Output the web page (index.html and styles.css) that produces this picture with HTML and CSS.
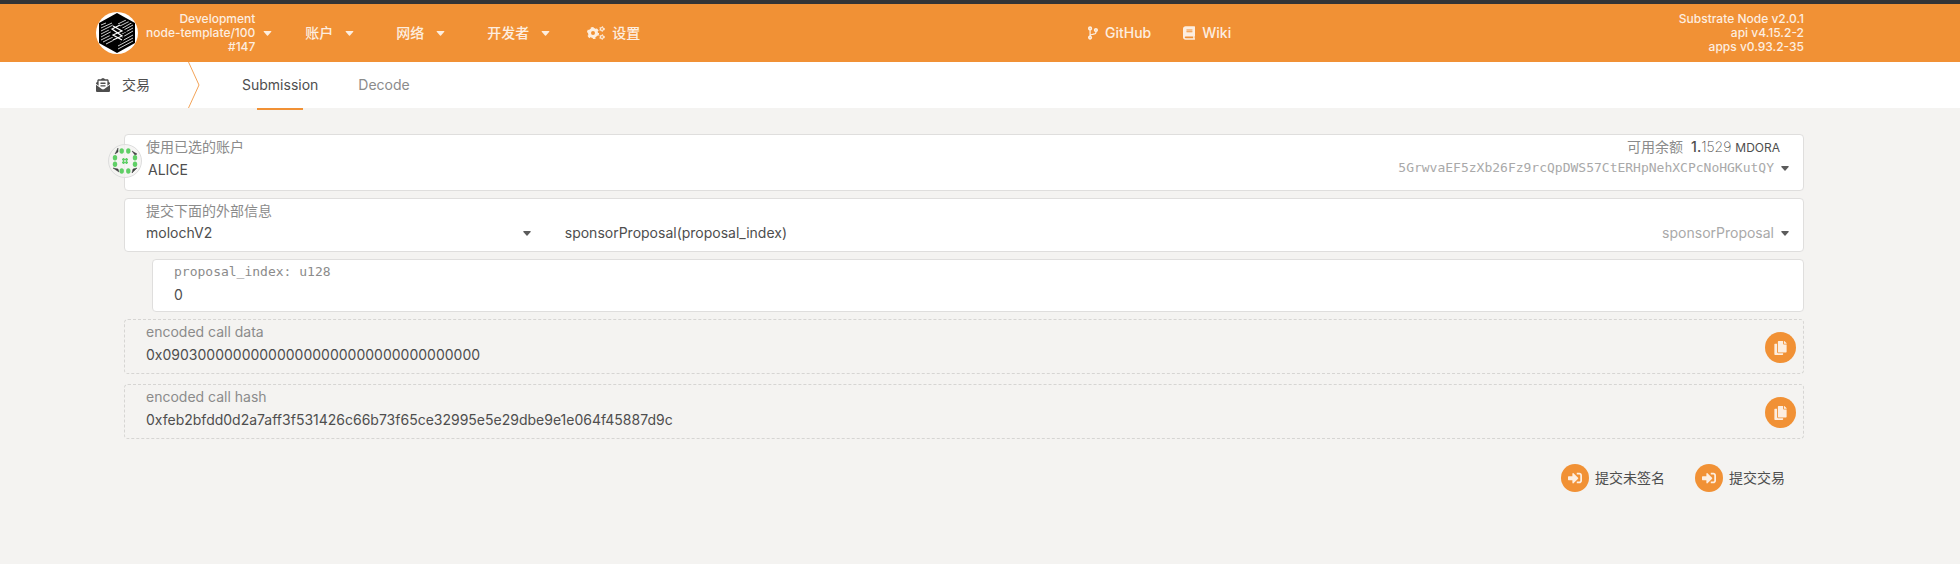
FILE: index.html
```html
<!DOCTYPE html>
<html lang="zh-CN">
<head>
<meta charset="utf-8">
<meta name="viewport" content="width=device-width, initial-scale=1">
<title>交易 - Submission</title>
<link rel="stylesheet" href="styles.css">
</head>
<body>
<svg class="sprite" aria-hidden="true">
  <symbol id="caret" viewBox="0 0 10 6"><path d="M1 0h8q1.200 0 .5 1L5.600 5.400q-.6.6-1.200 0L.5 1Q-.2 0 1 0z"/></symbol>
  <symbol id="copy" viewBox="0 0 448 512"><path d="M320 448v40c0 13.255-10.745 24-24 24H24c-13.255 0-24-10.745-24-24V120c0-13.255 10.745-24 24-24h72v296c0 30.879 25.121 56 56 56h168zm0-344V0H152c-13.255 0-24 10.745-24 24v368c0 13.255 10.745 24 24 24h272c13.255 0 24-10.745 24-24V128H344c-13.200 0-24-10.800-24-24zm120.971-31.029L375.029 7.029A24 24 0 0 0 358.059 0H352v96h96v-6.059a24 24 0 0 0-7.029-16.970z"/></symbol>
  <symbol id="sign-in" viewBox="0 0 512 512"><path d="M416 448h-84c-6.600 0-12-5.400-12-12v-40c0-6.600 5.400-12 12-12h84c17.700 0 32-14.300 32-32V160c0-17.700-14.300-32-32-32h-84c-6.600 0-12-5.400-12-12V76c0-6.600 5.400-12 12-12h84c53 0 96 43 96 96v192c0 53-43 96-96 96zm-47-201L201 79c-15-15-41-4.500-41 17v96H24c-13.300 0-24 10.700-24 24v96c0 13.300 10.700 24 24 24h136v96c0 21.500 26 32 41 17l168-168c9.300-9.400 9.300-24.600 0-34z"/></symbol>
</svg>

<header class="topbar">
  <div class="topbar-left">
    <button class="chain" type="button">
      <svg class="logo" viewBox="0 0 42 42" aria-hidden="true">
        <defs><clipPath id="stripes"><path d="M5 12L21 3l16 9v18l-16 9-16-9z"/></clipPath></defs>
        <circle cx="21" cy="21" r="21" fill="#fff"/>
        <path d="M21 1l18 10v20L21 41 3 31V11z" fill="#000"/>
        <g clip-path="url(#stripes)" fill="none" stroke="#fff" stroke-width=".8">
          <path d="M5 16l11 -5M5 19l12-6M5 22l12-6M5 25l13-7M5 28l14-7M7 30l12-6M10 32l10-5"/>
          <path d="M22 12l8-4M24 14l10-5M25 17l12-7M24 20l13-7M24 23l13-7M25 26l12-7M24 30l13-7M22 34l15-8M22 37l15-8M5 13l5-2"/>
        </g>
        <path d="M17 13l10 6-10 4 10 6M24 14l-8 4 9 6-8 4" fill="none" stroke="#000" stroke-width="4"/>
        <path d="M17 14l9 5-9 4 9 5M24 13l-8 4 10 7-9 4" fill="none" stroke="#fff" stroke-width="1.200"/>
      </svg>
      <span class="info">Development<br>node-template/100<br>#147</span>
      <svg class="caret"><use href="#caret"/></svg>
    </button>
    <nav class="menu">
      <button class="menu-item" type="button">账户<svg class="caret"><use href="#caret"/></svg></button>
      <button class="menu-item" type="button">网络<svg class="caret"><use href="#caret"/></svg></button>
      <button class="menu-item" type="button">开发者<svg class="caret"><use href="#caret"/></svg></button>
    </nav>
    <a class="menu-link settings" href="#settings">
      <svg class="cogs" viewBox="0 0 18 14" fill="none" stroke="currentColor" aria-hidden="true">
        <circle cx="6" cy="7" r="3.500" stroke-width="3"/>
        <circle cx="6" cy="7" r="5.200" stroke-width="1.800" stroke-dasharray="2.700 2.745"/>
        <circle cx="15" cy="3" r="1.500" stroke-width="1.200"/>
        <circle cx="15" cy="3" r="2.400" stroke-width="1" stroke-dasharray="1.200 1.313"/>
        <circle cx="15" cy="11" r="1.500" stroke-width="1.200"/>
        <circle cx="15" cy="11" r="2.400" stroke-width="1" stroke-dasharray="1.200 1.313"/>
      </svg>设置</a>
  </div>
  <nav class="links">
    <a class="menu-link" href="#github"><svg class="icon-branch" viewBox="0 0 384 512" aria-hidden="true"><path d="M384 144c0-44.200-35.800-80-80-80s-80 35.800-80 80c0 36.400 24.300 67.100 57.500 76.800-.6 16.100-4.200 28.500-11 36.900-15.400 19.200-49.300 22.400-85.200 25.700-28.200 2.600-57.400 5.400-81.300 16.900v-144c32.500-10.200 56-40.500 56-76.300 0-44.200-35.800-80-80-80S0 35.800 0 80c0 35.800 23.500 66.100 56 76.300v199.300C23.500 365.900 0 396.200 0 432c0 44.200 35.800 80 80 80s80-35.800 80-80c0-34-21.200-63.100-51.200-74.600 3.100-5.200 7.800-9.800 14.900-13.400 16.200-8.200 40.400-10.400 66.100-12.800 42.200-3.900 90-8.400 118.200-43.400 14-17.400 21.100-39.800 21.600-67.900 31.600-10.800 54.400-40.700 54.400-75.900zM80 64c8.800 0 16 7.200 16 16s-7.200 16-16 16-16-7.200-16-16 7.200-16 16-16zm0 384c-8.800 0-16-7.200-16-16s7.200-16 16-16 16 7.200 16 16-7.200 16-16 16zm224-320c8.800 0 16 7.200 16 16s-7.200 16-16 16-16-7.200-16-16 7.200-16 16-16z"/></svg>GitHub</a>
    <a class="menu-link" href="#wiki"><svg class="icon-book" viewBox="0 0 448 512" aria-hidden="true"><path d="M448 360V24c0-13.300-10.700-24-24-24H96C43 0 0 43 0 96v320c0 53 43 96 96 96h328c13.300 0 24-10.700 24-24v-16c0-7.500-3.500-14.300-8.900-18.700-4.200-15.400-4.200-59.300 0-74.700 5.400-4.300 8.900-11.100 8.900-18.600zM128 134c0-3.300 2.700-6 6-6h212c3.300 0 6 2.700 6 6v20c0 3.300-2.700 6-6 6H134c-3.300 0-6-2.700-6-6v-20zm0 64c0-3.300 2.700-6 6-6h212c3.300 0 6 2.700 6 6v20c0 3.300-2.700 6-6 6H134c-3.300 0-6-2.700-6-6v-20zm253.400 250H96c-17.700 0-32-14.300-32-32 0-17.600 14.400-32 32-32h285.400c-1.900 17.100-1.900 46.900 0 64z"/></svg>Wiki</a>
  </nav>
  <div class="info">Substrate Node v2.0.1<br>api v4.15.2-2<br>apps v0.93.2-35</div>
</header>

<nav class="tabs">
  <span class="section"><svg class="icon-mail" viewBox="0 0 512 512" aria-hidden="true"><path d="M176 216h160c8.840 0 16-7.160 16-16v-16c0-8.840-7.160-16-16-16H176c-8.840 0-16 7.160-16 16v16c0 8.840 7.160 16 16 16zm-16 80c0 8.840 7.160 16 16 16h160c8.840 0 16-7.160 16-16v-16c0-8.840-7.160-16-16-16H176c-8.840 0-16 7.160-16 16v16zm96 121.130c-16.420 0-32.840-5.060-46.860-15.190L0 250.860V464c0 26.510 21.490 48 48 48h416c26.510 0 48-21.490 48-48V250.860L302.860 401.940c-14.020 10.120-30.440 15.190-46.860 15.190zm237.610-254.180c-8.850-6.940-17.240-13.470-29.610-22.810V96c0-26.510-21.490-48-48-48h-77.550c-3.040-2.200-5.870-4.260-9.040-6.560C312.600 29.170 279.200-.35 256 0c-23.200-.35-56.590 29.170-73.410 41.440-3.170 2.300-6 4.360-9.040 6.560H96c-26.510 0-48 21.490-48 48v44.140c-12.370 9.330-20.760 15.870-29.610 22.810A47.995 47.995 0 0 0 0 200.720v10.650l96 69.350V96h320v184.720l96-69.350v-10.650c0-14.740-6.780-28.670-18.390-37.770z"/></svg>交易</span>
  <svg class="divider" viewBox="0 0 12 46" aria-hidden="true"><path d="M.5 0l10.500 23L.5 46"/></svg>
  <a class="tab active" href="#submission">Submission</a>
  <a class="tab" href="#decode">Decode</a>
</nav>

<main class="content">
  <section class="card account">
    <svg class="identicon" viewBox="0 0 34 34" aria-hidden="true">
      <circle cx="17" cy="17" r="16.500" fill="#f4f3f1" fill-opacity=".8" stroke="#ddd"/>
      <path d="M7 10l3-6v4zM24 7l5 3-2 1zM5 24l5 1 1 3zM24 29l1-4 4-1z" fill="#3f4040" stroke="#3f4040" stroke-width=".5"/>
      <g fill="#5fcf66">
        <ellipse cx="13.700" cy="7" rx="2.200" ry="2.700"/><ellipse cx="20.300" cy="7" rx="2.200" ry="2.700"/>
        <ellipse cx="7" cy="13.700" rx="2.200" ry="2.700"/><ellipse cx="27" cy="13.700" rx="2.200" ry="2.700"/>
        <ellipse cx="7" cy="20.300" rx="2.200" ry="2.700"/><ellipse cx="27" cy="20.300" rx="2.200" ry="2.700"/>
        <ellipse cx="13.700" cy="27" rx="2.200" ry="2.700"/><ellipse cx="20.300" cy="27" rx="2.200" ry="2.700"/>
      </g>
      <path d="M15.500 14v6M18.500 14v6M14 15.500h6M14 18.500h6" stroke="#5fcf66" stroke-width="1.300"/>
    </svg>
    <div class="field">
      <label class="label" for="account">使用已选的账户</label>
      <input class="value" id="account" type="text" value="ALICE">
    </div>
    <div class="account-side">
      <div class="balance"><span class="label">可用余额</span><span><b>1.</b><span class="decimals">1529</span> <span class="unit">MDORA</span></span></div>
      <button class="address" type="button">5GrwvaEF5zXb26Fz9rcQpDWS57CtERHpNehXCPcNoHGKutQY<svg class="small-caret"><use href="#caret"/></svg></button>
    </div>
  </section>

  <section class="card extrinsic">
    <label class="label" for="module">提交下面的外部信息</label>
    <div class="extrinsic-row">
      <div class="module">
        <select class="value" id="module"><option>molochV2</option></select>
        <svg class="small-caret"><use href="#caret"/></svg>
      </div>
      <button class="method" type="button"><span>sponsorProposal(proposal_index)</span><span class="method-name">sponsorProposal</span><svg class="small-caret"><use href="#caret"/></svg></button>
    </div>
  </section>

  <section class="card param">
    <label class="label mono" for="index">proposal_index: u128</label>
    <input class="value" id="index" type="text" value="0">
  </section>

  <section class="card output">
    <div class="field">
      <label class="label" for="data">encoded call data</label>
      <input class="value" id="data" type="text" readonly value="0x090300000000000000000000000000000000">
    </div>
    <button class="round copy" type="button" aria-label="copy call data"><svg class="icon-copy"><use href="#copy"/></svg></button>
  </section>

  <section class="card output">
    <div class="field">
      <label class="label" for="hash">encoded call hash</label>
      <input class="value" id="hash" type="text" readonly value="0xfeb2bfdd0d2a7aff3f531426c66b73f65ce32995e5e29dbe9e1e064f45887d9c">
    </div>
    <button class="round copy" type="button" aria-label="copy call hash"><svg class="icon-copy"><use href="#copy"/></svg></button>
  </section>

  <div class="actions">
    <button class="action" type="button"><span class="round"><svg class="icon-sign"><use href="#sign-in"/></svg></span>提交未签名</button>
    <button class="action" type="button"><span class="round"><svg class="icon-sign"><use href="#sign-in"/></svg></span>提交交易</button>
  </div>
</main>
</body>
</html>
```
FILE: styles.css
```css
* {
  box-sizing: border-box;
}

body {
  margin: 0;
  min-height: 100vh;
  background: #f4f3f1;
  color: #4e4e4e;
  font: 14px/20px Inter, "Noto Sans CJK SC", sans-serif;
}

button,
input,
select {
  margin: 0;
  padding: 0;
  border: 0;
  background: none;
  color: inherit;
  font: inherit;
  appearance: none;
}

a {
  color: inherit;
  text-decoration: none;
}

svg {
  display: block;
  flex: none;
  fill: currentColor;
}

.sprite {
  position: absolute;
  width: 0;
  height: 0;
}

/* header */
.topbar {
  display: flex;
  align-items: center;
  justify-content: space-between;
  min-height: 62px;
  padding: 0 156px 0 96px;
  border-top: 4px solid #333436;
  background: #f19135;
  color: #fdeee0;
  font-weight: 500;
}

.topbar-left,
.chain,
.menu,
.menu-item,
.links,
.menu-link {
  display: flex;
  align-items: center;
}

.logo {
  width: 42px;
  height: 42px;
}

.info {
  font-size: 12px;
  line-height: 14px;
  text-align: right;
}

.chain .info {
  margin: 0 8px;
}

.caret {
  width: 9px;
  height: 5px;
}

.menu {
  gap: 42px;
  margin-left: 33px;
}

.menu-item {
  gap: 12px;
}

.menu-link {
  gap: 7px;
}

.settings {
  margin-left: 37px;
}

.links {
  gap: 32px;
}

.cogs {
  width: 18px;
  height: 14px;
  fill: none;
}

.icon-branch {
  width: 10px;
  height: 14px;
}

.icon-book {
  width: 12px;
  height: 14px;
}

/* tabs */
.tabs {
  display: flex;
  align-items: center;
  height: 46px;
  padding: 0 96px;
  background: #fff;
}

.section {
  display: flex;
  align-items: center;
  gap: 12px;
}

.icon-mail {
  width: 14px;
  height: 14px;
}

.divider {
  width: 12px;
  height: 46px;
  margin: 0 42px 0 38px;
  fill: none;
  stroke: #f3a458;
}

.tab {
  position: relative;
  margin-right: 40px;
  color: #8b8b8b;
}

.tab.active {
  color: #4e4e4e;
}

.tab.active::after {
  content: "";
  position: absolute;
  top: 33px;
  left: 20%;
  right: 20%;
  height: 2px;
  background: #f19135;
}

/* cards */
.content {
  display: flex;
  flex-direction: column;
  gap: 7px;
  padding: 26px 156px 24px 124px;
}

.card {
  min-height: 53px;
  padding: 2px 21px 5px;
  border: 1px solid #dfdedd;
  border-radius: 4px;
  background: #fff;
}

.label {
  display: block;
  color: #8b8b8b;
}

.value {
  display: block;
  width: 100%;
  height: 24px;
}

.mono {
  font: 13px/20px "DejaVu Sans Mono", monospace;
}

.small-caret {
  width: 8px;
  height: 5px;
  color: #5c5c5c;
}

.field {
  flex: 1;
}

.account {
  position: relative;
  display: flex;
  min-height: 57px;
  padding-right: 14px;
}

.account .value {
  padding-left: 2px;
}

.identicon {
  position: absolute;
  left: -17px;
  top: 9px;
  width: 34px;
  height: 34px;
}

.account-side {
  display: flex;
  flex-direction: column;
  align-items: flex-end;
}

.balance {
  display: flex;
  gap: 8px;
  padding-right: 9px;
}

.balance b {
  font-weight: 500;
}

.decimals {
  font-weight: 200;
}

.unit {
  font-size: 12px;
}

.address {
  display: flex;
  align-items: center;
  gap: 7px;
  color: #a9a9a9;
  font: 13px/20px "DejaVu Sans Mono", monospace;
}

.extrinsic {
  min-height: 54px;
  padding-right: 14px;
}

.extrinsic-row {
  display: grid;
  grid-template-columns: 11fr 35fr;
  gap: 34px;
}

.module,
.method {
  display: flex;
  align-items: center;
}

.method {
  gap: 7px;
}

.method-name {
  margin-left: auto;
  color: #a9a9a9;
}

.param {
  margin-left: 28px;
}

.output {
  display: flex;
  align-items: center;
  min-height: 55px;
  padding: 2px 7px 0 21px;
  border: 1px dashed #d6d5d3;
  background: none;
}

.output .field {
  align-self: flex-start;
}

.output + .output {
  margin-top: 3px;
}

.round {
  display: grid;
  place-items: center;
  width: 28px;
  height: 28px;
  border-radius: 50%;
  background: #f19135;
  color: #fdeee0;
}

.round.copy {
  width: 31px;
  height: 31px;
}

.icon-copy {
  width: 13px;
  height: 14px;
}

.icon-sign {
  width: 14px;
  height: 14px;
}

.actions {
  display: flex;
  justify-content: flex-end;
  gap: 30px;
  padding: 18px 19px 0 0;
}

.action {
  display: flex;
  align-items: center;
  gap: 6px;
}
```
